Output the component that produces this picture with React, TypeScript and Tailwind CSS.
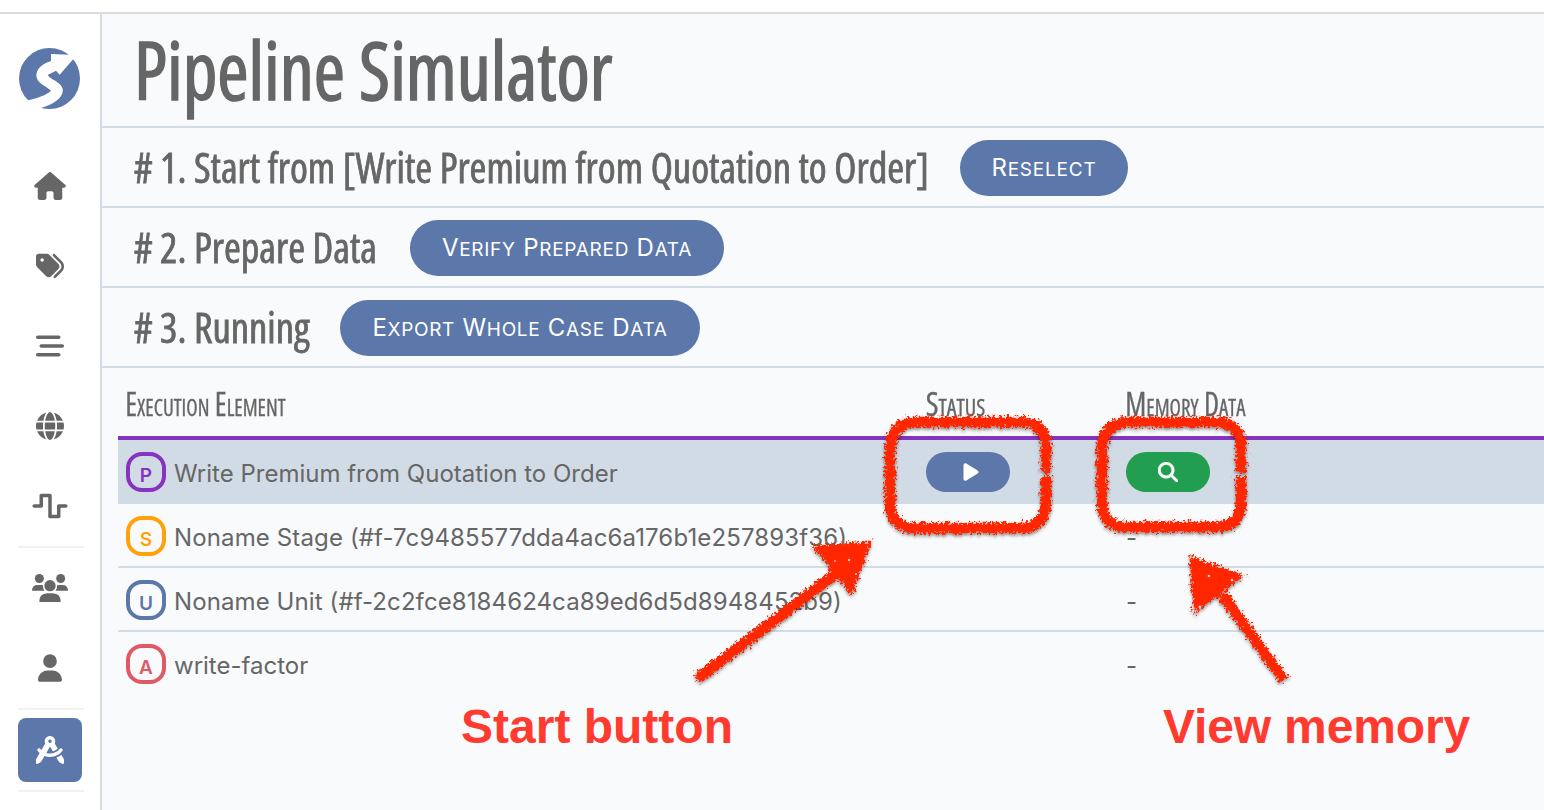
import type { ReactNode } from "react";
import {
  FaBarsStaggered,
  FaCompassDrafting,
  FaGlobe,
  FaHouse,
  FaMagnifyingGlass,
  FaPlay,
  FaTags,
  FaUser,
  FaWaveSquare,
} from "react-icons/fa6";

function Logo() {
  return (
    <svg viewBox="27 24 183 183" className="h-[61px] w-[61px]">
      <circle cx="118.5" cy="115.5" r="91.5" fill="#5c77aa" />
      <path
        fill="#fff"
        d="M123 42 L178 44.5 L200 40 L190 57 L149 104 L138 92 L113 105 C120 118 152 125 158 146 C162 172 135 192 92 204 L80 215 L30 205 L53 181 C85 173 108 166 123 152 C108 138 79 130 79 106 C80 82 102 70 123 63 Z"
      />
    </svg>
  );
}

function UsersIcon() {
  return (
    <svg viewBox="96 132 108 84" className="h-7 w-9" fill="currentColor">
      <circle cx="118" cy="145.5" r="13.5" />
      <circle cx="182" cy="145.5" r="13.5" />
      <circle cx="150" cy="167" r="17" />
      <path d="M96 182 Q96 165 113 165 H123 Q126 165 129 166 Q128 176 133 182 Z" />
      <path d="M204 182 Q204 165 187 165 H177 Q174 165 171 166 Q172 176 167 182 Z" />
      <path d="M118 216 Q117 191 142 190 H158 Q183 191 182 216 Z" />
    </svg>
  );
}

function NavItem({ children }: { children: ReactNode }) {
  return <div className="flex h-20 w-full shrink-0 items-center justify-center text-[#666666]">{children}</div>;
}

function Divider() {
  return <div className="ml-[18px] h-0.5 w-[66px] shrink-0 self-start bg-[#f1f2f3]" />;
}

function Sidebar() {
  return (
    <nav className="flex w-[102px] shrink-0 flex-col items-center border-r-2 border-[#d1dce7] bg-white">
      <div className="mb-[37px] mt-[34px] flex w-full pl-[19px]">
        <Logo />
      </div>
      <NavItem><FaHouse className="h-7 w-8" /></NavItem>
      <NavItem><FaTags className="h-7 w-7" /></NavItem>
      <NavItem><FaBarsStaggered className="h-7 w-7" /></NavItem>
      <NavItem><FaGlobe className="h-7 w-7" /></NavItem>
      <NavItem><FaWaveSquare className="h-7 w-9" /></NavItem>
      <Divider />
      <NavItem><UsersIcon /></NavItem>
      <NavItem><FaUser className="h-7 w-6" /></NavItem>
      <Divider />
      <div className="my-2 flex h-16 w-16 shrink-0 items-center justify-center rounded-lg bg-[#5c77aa] text-white">
        <FaCompassDrafting className="h-7 w-7" />
      </div>
      <Divider />
    </nav>
  );
}

const condensed = "origin-left whitespace-nowrap font-['Open_Sans',sans-serif] [font-stretch:75%]";

function SmallCaps({ text }: { text: string }) {
  return (
    <span className="whitespace-pre">
      {text.split(" ").map((word, i) => (
        <span key={word}>
          {i > 0 && " "}
          {word[0]}
          <span className="text-[19px] uppercase">{word.slice(1)}</span>
        </span>
      ))}
    </span>
  );
}

function Section({ title, titleClass, action, actionClass }: {
  title: string;
  titleClass: string;
  action: string;
  actionClass: string;
}) {
  return (
    <section className="flex h-20 shrink-0 items-center gap-8 border-b-2 border-[#d1dce7] pl-8 pt-0.5">
      <h2 className={`pb-0.5 ${titleClass}`}>
        <div className={`${condensed} scale-x-[0.968] text-[42px] font-medium leading-[74px] [-webkit-text-stroke:0.8px_#666666]`}>
          {title}
        </div>
      </h2>
      <button className={`flex h-14 items-center justify-center rounded-full bg-[#5c77aa] text-2xl text-white ${actionClass}`}>
        <SmallCaps text={action} />
      </button>
    </section>
  );
}

function Row({ tone, letter, name, nameClass = "", className = "", children, memory }: {
  tone: string;
  letter: string;
  name: string;
  nameClass?: string;
  className?: string;
  children?: ReactNode;
  memory: ReactNode;
}) {
  return (
    <div className={`grid h-16 grid-cols-[800px_200px_1fr] items-center text-2xl ${className}`}>
      <div className="flex items-center pl-2">
        <span className={`flex h-10 w-10 items-center justify-center rounded-2xl border-4 pt-[7px] text-[19px] font-semibold ${tone}`}>
          {letter}
        </span>
        <span className={`whitespace-nowrap pl-2 pt-1 ${nameClass}`}>{name}</span>
      </div>
      <div className="pl-2">{children}</div>
      <div className="pl-2">{memory}</div>
    </div>
  );
}

function Empty() {
  return <div className="pt-1">-</div>;
}

function Annotations() {
  return (
    <div className="pointer-events-none absolute inset-0">
      <svg viewBox="0 0 1544 810" className="absolute inset-0 h-full w-full">
        <defs>
          <filter id="crayon" x="0" y="0" width="1544" height="810" filterUnits="userSpaceOnUse">
            <feTurbulence type="fractalNoise" baseFrequency="0.42" numOctaves="2" seed="4" result="n" />
            <feDisplacementMap in="SourceGraphic" in2="n" scale="11" xChannelSelector="R" yChannelSelector="G" result="d" />
            <feDropShadow in="d" dx="0" dy="2" stdDeviation="1.5" floodColor="#000" floodOpacity="0.45" />
          </filter>
        </defs>
        <g filter="url(#crayon)" fill="none" stroke="#ff2600" strokeWidth="10.5">
          <path d="M1046 472 V444 Q1044 423 1022 422 H914 Q891 424 890 449 V503 Q891 527 912 528 H1022 Q1044 527 1046 505 V476" />
          <path d="M1241 472 V444 Q1239 423 1217 422 H1126 Q1103 424 1102 449 V503 Q1103 526 1124 527 H1217 Q1239 527 1241 505 V476" />
          <path d="M697 679 L842 569" />
          <path d="M817 548 L868 544 L851 591 Z" fill="#ff2600" strokeWidth="5" />
          <path d="M1284 680 L1222 594" />
          <path d="M1192 559 L1240 576 L1196 609 Z" fill="#ff2600" strokeWidth="5" />
        </g>
        <g fill="#f9fafd" opacity="0.8">
          <circle cx="849" cy="560" r="1.2" />
          <circle cx="856" cy="574" r="1" />
          <circle cx="835" cy="561" r="0.9" />
          <circle cx="1209" cy="576" r="1.3" />
          <circle cx="1232" cy="580" r="1.3" />
          <circle cx="1200" cy="607" r="1.4" />
        </g>
      </svg>
      <div className="absolute left-[461px] top-[699px] whitespace-nowrap font-['Liberation_Sans',sans-serif] text-5xl font-bold leading-[56px] text-[#ff3b30]">
        Start button
      </div>
      <div className="absolute left-[1163px] top-[699px] whitespace-nowrap font-['Liberation_Sans',sans-serif] text-5xl font-bold leading-[56px] tracking-[-0.15px] text-[#ff3b30]">
        View memory
      </div>
    </div>
  );
}

export default function App() {
  return (
    <div className="relative flex h-[810px] w-[1544px] flex-col overflow-hidden bg-white font-['Inter',sans-serif] text-[#666666]">
      <div className="h-3.5 shrink-0 border-b-2 border-[#d9dbdf]" />
      <div className="flex min-h-0 flex-1">
        <Sidebar />
        <main className="flex min-w-0 flex-1 flex-col bg-[#f9fafc]">
          <header className="h-[114px] shrink-0 border-b-2 border-[#d1dce7] pl-8">
            <h1 className={`${condensed} scale-x-[0.945] text-[80px] font-medium leading-[109px] [-webkit-text-stroke:1.5px_#666666]`}>
              Pipeline Simulator
            </h1>
          </header>
          <Section
            title="# 1. Start from [Write Premium from Quotation to Order]"
            titleClass="w-[794px]"
            action="Reselect"
            actionClass="w-[168px] tracking-[0.8px]"
          />
          <Section
            title="# 2. Prepare Data"
            titleClass="w-[244px]"
            action="Verify Prepared Data"
            actionClass="w-[314px] tracking-[0.72px]"
          />
          <Section
            title="# 3. Running"
            titleClass="w-[174px]"
            action="Export Whole Case Data"
            actionClass="w-[360px] tracking-[0.68px]"
          />
          <div className="pl-4">
            <div className="grid h-[72px] grid-cols-[800px_200px_1fr] items-center border-b-4 border-[#8633c0] text-[32.5px] [-webkit-text-stroke:0.3px_#666666] [font-variant:small-caps]">
              <div className={`${condensed} scale-x-[0.909] pl-2 pt-1`}>Execution Element</div>
              <div className={`${condensed} scale-x-[0.96] pl-2 pt-1`}>Status</div>
              <div className={`${condensed} scale-x-[0.91] pl-2 pt-1`}>Memory Data</div>
            </div>
            <Row
              tone="border-[#8633c0] text-[#8633c0]"
              letter="P"
              name="Write Premium from Quotation to Order"
              className="bg-[#d1dbe5]"
              memory={
                <button className="flex h-10 w-[84px] items-center justify-center rounded-full bg-[#219e50] text-white">
                  <FaMagnifyingGlass className="h-5 w-5" stroke="currentColor" strokeWidth={12} />
                </button>
              }
            >
              <button className="flex h-10 w-[84px] items-center justify-center rounded-full bg-[#5c77aa] pl-[5px] text-white">
                <FaPlay className="h-5 w-5" />
              </button>
            </Row>
            <Row
              tone="border-[#ffa20a] text-[#ffa20a]"
              letter="S"
              name="Noname Stage (#f-7c9485577dda4ac6a176b1e257893f36)"
              nameClass="tracking-[0.13px]"
              className="border-b-2 border-[#d1dce7] pt-0.5"
              memory={<Empty />}
            />
            <Row
              tone="border-[#5c77aa] text-[#5c77aa]"
              letter="U"
              name="Noname Unit (#f-2c2fce8184624ca89ed6d5d8948452b9)"
              nameClass="tracking-[0.1px]"
              className="border-b-2 border-[#d1dce7] pt-0.5"
              memory={<Empty />}
            />
            <Row tone="border-[#e05a66] text-[#e05a66]" letter="A" name="write-factor" memory={<Empty />} />
          </div>
        </main>
      </div>
      <Annotations />
    </div>
  );
}
